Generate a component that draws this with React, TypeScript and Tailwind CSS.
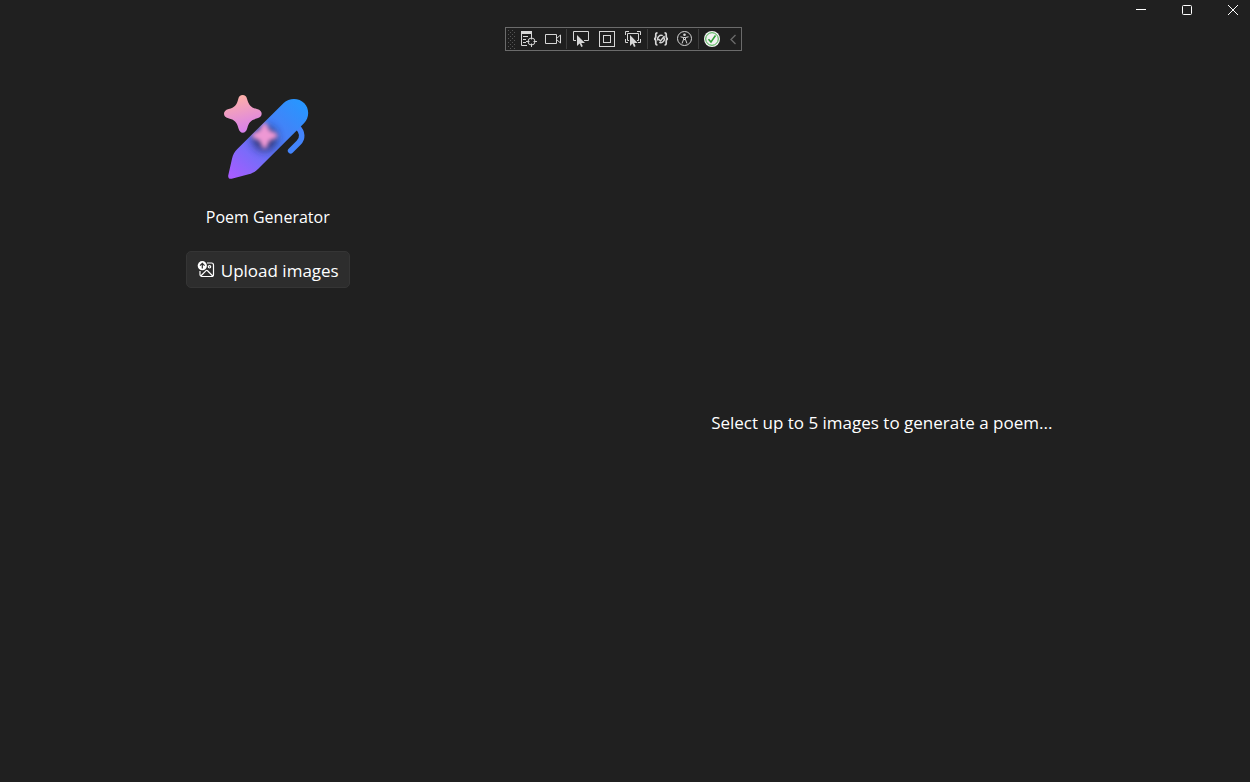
import type { ReactNode } from "react";

function ToolButton({ label, wide, children }: { label: string; wide?: boolean; children: ReactNode }) {
  return (
    <button
      type="button"
      aria-label={label}
      className={`flex h-full items-center justify-center hover:bg-white/10 ${wide ? "w-[26px]" : "w-6"}`}
    >
      {children}
    </button>
  );
}

function Separator() {
  return <span className="mx-px h-5 w-px bg-[#3d3d3d]" />;
}

const icon = { width: 16, height: 16, viewBox: "0 0 16 16", fill: "none", stroke: "#d6d6d6" };

function DebugToolbar() {
  return (
    <div role="toolbar" aria-label="Debug tools" className="flex h-6 items-center border border-[#6b6b6b] bg-[#1f1f1f]">
      <svg width="11" height="20" viewBox="0 0 11 20" fill="#555555" shapeRendering="crispEdges">
        {[1, 5, 9, 13, 17].map((y) => (
          <g key={y}>
            <rect x="2" y={y} width="1" height="1" />
            <rect x="6" y={y} width="1" height="1" />
            <rect x="4" y={y + 2} width="1" height="1" />
            <rect x="8" y={y + 2} width="1" height="1" />
          </g>
        ))}
      </svg>
      <ToolButton label="Go to live visual tree">
        <svg {...icon}>
          <path d="M0 0h11v3H0z" fill="#d6d6d6" stroke="none" />
          <path d="M.5 3v11.500H6M10.500 3v2M2 5.500h5M2 8.500h3M2 11.500h3" />
          <circle cx="10.500" cy="10.500" r="3.500" />
          <path d="M10.500 5v3.500M10.500 12.500V16M5 10.500h3.500M12.500 10.500H16" />
        </svg>
      </ToolButton>
      <ToolButton label="Record">
        <svg {...icon}>
          <path d="M.5 3.500h11v9H.5zM11.500 7.500l4-3.500v8l-4-3.500" />
        </svg>
      </ToolButton>
      <Separator />
      <ToolButton label="Select element" wide>
        <svg {...icon}>
          <path d="M3 9.500H.5v-9h15v9H11" />
          <path d="M4 4v11l2.700-2.500L8.200 16l1.600-.8-1.500-3.200H12z" fill="#d6d6d6" stroke="none" />
        </svg>
      </ToolButton>
      <ToolButton label="Display layout adorners" wide>
        <svg {...icon} shapeRendering="crispEdges">
          <path d="M.5.5h15v15H.5zM4.500 4.500h7v7h-7z" />
        </svg>
      </ToolButton>
      <ToolButton label="Track focused element" wide>
        <svg {...icon}>
          <path d="M.5 4V.5H4M12 .5h3.500V4M.5 8v3.500H3M15.500 8v3.500H13M4 9.500H2.500v-7h11v7H12" />
          <path d="M5 4v11l2.500-2.500L9 16l1.600-.8L9.200 12h3.500z" fill="#d6d6d6" stroke="none" />
        </svg>
      </ToolButton>
      <Separator />
      <ToolButton label="Binding failures">
        <svg {...icon} strokeWidth="1.700">
          <path d="M4.500 1.800C2.300 1.800 2.800 3.500 2.800 5S2.500 7.800 1 7.800c1.500 0 1.800 1.200 1.800 2.700s-.5 3.500 1.700 3.500M11.500 1.800c2.200 0 1.700 1.700 1.700 3.200s.3 2.800 1.800 2.800c-1.500 0-1.800 1.200-1.800 2.700s.5 3.500-1.700 3.500" />
          <path d="M9.800 4.700A3.600 3.600 0 0 0 5 9.500M6.200 11.300A3.600 3.600 0 0 0 11 6.500M5.500 8l2 2 4-5" strokeWidth="1.400" />
        </svg>
      </ToolButton>
      <ToolButton label="Accessibility checker">
        <svg {...icon}>
          <circle cx="7.500" cy="7.500" r="7" />
          <circle cx="7.500" cy="3.700" r="1.300" fill="#d6d6d6" stroke="none" />
          <path d="M3.500 5.800l3 .7v2L5 12.500M11.500 5.800l-3 .7v2l1.500 4M6.500 6.500h2M6.500 8.500h2" />
        </svg>
      </ToolButton>
      <Separator />
      <ToolButton label="Hot Reload is available">
        <svg width="16" height="16" viewBox="0 0 16 16" fill="none">
          <circle cx="8" cy="8" r="8" fill="#f2f2f2" />
          <circle cx="8" cy="8" r="6.300" stroke="#43b049" strokeWidth="1" />
          <path d="M4.500 8.200l2.500 2.800 4.500-6.500" stroke="#2f9e36" strokeWidth="1.500" />
        </svg>
      </ToolButton>
      <button type="button" aria-label="Collapse toolbar" className="flex h-full w-[17px] items-center justify-center">
        <svg width="7" height="12" viewBox="0 0 7 12" fill="none" stroke="#6b6b6b" strokeWidth="1.300">
          <path d="M6.500 2L2 6.500 6.500 11" />
        </svg>
      </button>
    </div>
  );
}

function Logo() {
  const star =
    "M80 27C87 27 91 31 93 38C99 58 104 64 123 69C133 72 137 77 137 83C137 90 133 94 124 97C105 102 99 108 94 126C91 136 87 140 80 140C74 140 70 136 67 126C62 108 56 102 37 97C28 94 24 90 24 83C24 77 28 72 38 69C56 64 62 58 67 38C69 31 73 27 80 27Z";
  const pen =
    "M203 51C220 35 249 35 265 52C281 69 280 96 264 112L126 249C118 257 110 262 98 265L47 278C40 280 35 275 37 267L48 218C51 206 56 197 64 189Z";
  return (
    <svg width="100" height="100" viewBox="6 0 300 300" fill="none" role="img" aria-label="Poem Generator logo">
      <defs>
        <linearGradient id="pen" x1="255" y1="50" x2="50" y2="280" gradientUnits="userSpaceOnUse">
          <stop stopColor="#2896ff" />
          <stop offset=".45" stopColor="#5079f4" />
          <stop offset="1" stopColor="#a95cff" />
        </linearGradient>
        <linearGradient id="star" x1="65" y1="27" x2="95" y2="140" gradientUnits="userSpaceOnUse">
          <stop stopColor="#ffb1a5" />
          <stop offset="1" stopColor="#d67df0" />
        </linearGradient>
        <filter id="soft" x="-50%" y="-50%" width="200%" height="200%">
          <feGaussianBlur stdDeviation="9" />
        </filter>
        <filter id="shade" x="-60%" y="-60%" width="220%" height="220%">
          <feGaussianBlur stdDeviation="13" />
        </filter>
        <clipPath id="penClip">
          <path d={pen} />
        </clipPath>
      </defs>
      <path d="M244 122C261 139 260 158 248 170L224 194" stroke="#4384fb" strokeWidth="17" strokeLinecap="round" />
      <path d={pen} fill="url(#pen)" />
      <g clipPath="url(#penClip)">
        <circle cx="146" cy="157" r="37" fill="#20265c" opacity=".85" filter="url(#shade)" />
        <path d={star} transform="translate(91 92) scale(.68)" fill="#ee98d4" filter="url(#soft)" />
      </g>
      <path d={star} fill="url(#star)" />
    </svg>
  );
}

function UploadIcon() {
  return (
    <svg width="18" height="18" viewBox="0 0 18 18" fill="none" stroke="#ffffff" strokeWidth="1.200">
      <path d="M10 2h4.500a2 2 0 0 1 2 2v9.500a2 2 0 0 1-2 2H5a2 2 0 0 1-2-2V10" />
      <path d="M3.800 15l5.300-5.300a1 1 0 0 1 1.400 0l5.300 5.300" />
      <circle cx="12.500" cy="5.800" r="1.200" />
      <circle cx="5.300" cy="4.700" r="4.600" fill="#ffffff" stroke="none" />
      <path d="M5.300 7.500v-5M3 4.600l2.300-2.300 2.300 2.300" stroke="#2d2d2d" />
    </svg>
  );
}

const captionButton = "flex h-5 w-[46px] shrink-0 items-center justify-center hover:bg-white/10";

export default function App() {
  return (
    <div className="flex min-h-screen flex-col overflow-hidden bg-[#202020] font-['Open_Sans','Noto_Sans',sans-serif] text-[17px] leading-6 text-white">
      <header className="-mr-1.5 flex h-[27px] items-start justify-end">
        <button type="button" aria-label="Minimize" className={captionButton}>
          <svg width="10" height="10" viewBox="0 0 10 10" stroke="#ffffff">
            <path d="M0 4.500h10" />
          </svg>
        </button>
        <button type="button" aria-label="Maximize" className={captionButton}>
          <svg width="10" height="10" viewBox="0 0 10 10" fill="none" stroke="#ffffff">
            <rect x=".5" y=".5" width="9" height="9" rx="1" />
          </svg>
        </button>
        <button type="button" aria-label="Close" className={captionButton}>
          <svg width="10" height="10" viewBox="0 0 10 10" stroke="#ffffff">
            <path d="M0 0l10 10M10 0L0 10" />
          </svg>
        </button>
      </header>
      <div className="flex justify-center pr-1">
        <DebugToolbar />
      </div>
      <main className="flex flex-1">
        <section className="flex w-[43%] flex-col items-center pt-[35px] pr-0.5">
          <Logo />
          <h1 className="mt-[19px] text-base leading-6">Poem Generator</h1>
          <button
            type="button"
            className="mt-[22px] flex h-[37px] items-center gap-1.5 rounded-[5px] border border-[#353535] bg-[#2d2d2d] px-2.5 hover:bg-[#323232]"
          >
            <UploadIcon />
            <span className="pt-0.5">Upload images</span>
          </button>
        </section>
        <section className="flex flex-1 items-center justify-center pr-6 pt-3">
          <p>Select up to 5 images to generate a poem...</p>
        </section>
      </main>
    </div>
  );
}
